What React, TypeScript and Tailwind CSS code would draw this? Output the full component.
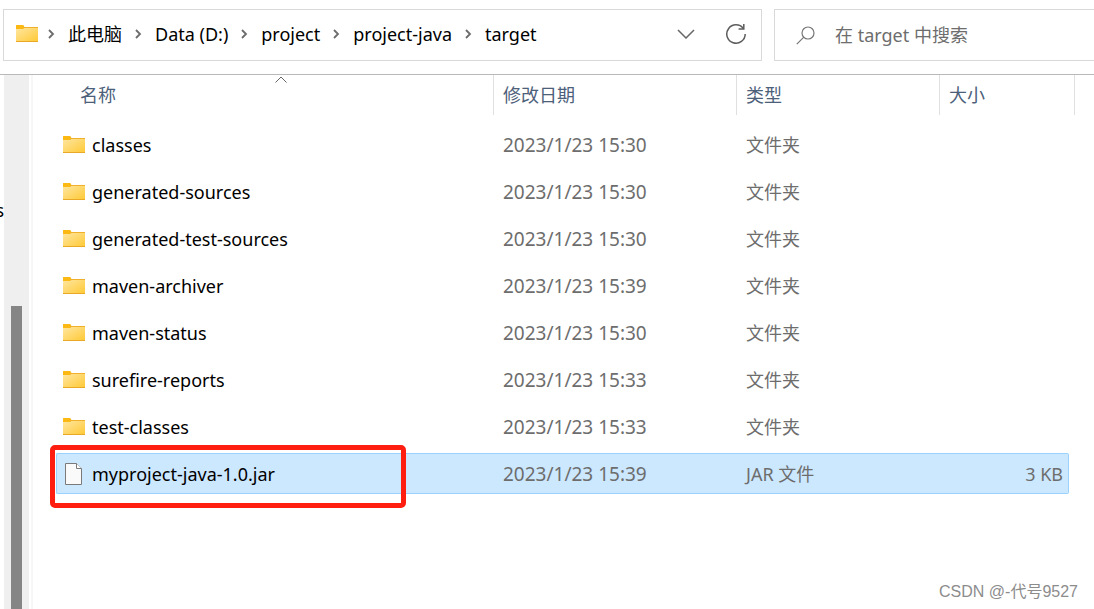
import type { ReactNode } from "react";

type Entry = {
  name: string;
  modified: string;
  type: string;
  size?: string;
  selected?: boolean;
};

const crumbs = ["此电脑", "Data (D:)", "project", "project-java", "target"];

const entries: Entry[] = [
  { name: "classes", modified: "2023/1/23 15:30", type: "文件夹" },
  { name: "generated-sources", modified: "2023/1/23 15:30", type: "文件夹" },
  { name: "generated-test-sources", modified: "2023/1/23 15:30", type: "文件夹" },
  { name: "maven-archiver", modified: "2023/1/23 15:39", type: "文件夹" },
  { name: "maven-status", modified: "2023/1/23 15:30", type: "文件夹" },
  { name: "surefire-reports", modified: "2023/1/23 15:33", type: "文件夹" },
  { name: "test-classes", modified: "2023/1/23 15:33", type: "文件夹" },
  { name: "myproject-java-1.0.jar", modified: "2023/1/23 15:39", type: "JAR 文件", size: "3 KB", selected: true },
];

function FolderIcon() {
  return (
    <svg width="22" height="18" viewBox="0 0 22 18" className="shrink-0" aria-hidden="true">
      <defs>
        <linearGradient id="folder" x1="0" y1="0" x2="1" y2="1">
          <stop offset="0" stopColor="#ffe6a0" />
          <stop offset="1" stopColor="#ffc934" />
        </linearGradient>
      </defs>
      <path d="M0 1 Q0 0 1 0 H7 L8.5 2 H22 V5 H0 Z" fill="#f0b02c" />
      <path d="M0 4 H7 L8.5 3 H22 V17 H0 Z" fill="url(#folder)" />
      <path d="M0 1 Q0 0 1 0 H7 L8 1.5 L7 4 H0 Z" fill="#fdb913" />
      <rect y="16" width="22" height="1" fill="#e9a825" />
    </svg>
  );
}

function FileIcon() {
  return (
    <svg width="22" height="22" viewBox="0 0 22 22" className="shrink-0" aria-hidden="true">
      <path d="M2.5 0.5 H13.5 L18.5 5.5 V21.5 H2.5 Z" fill="#fafafa" stroke="#7a7a7a" />
      <path d="M13.5 0.5 V5.5 H18.5" fill="#fff" stroke="#7a7a7a" />
    </svg>
  );
}

function Crumb({ children }: { children: ReactNode }) {
  return (
    <li className="flex items-center gap-[13px]">
      <svg width="7" height="10" viewBox="0 0 7 10" fill="none" stroke="#6b6b6b" strokeWidth="1.8" aria-hidden="true">
        <path d="M1 1 L5 5 L1 9" />
      </svg>
      <button type="button" className="whitespace-nowrap text-black">{children}</button>
    </li>
  );
}

function HeadCell({ children, first, last }: { children: ReactNode; first?: boolean; last?: boolean }) {
  return (
    <th scope="col" colSpan={last ? 2 : 1} className="p-0 pb-1.5 font-normal text-left text-[#4c607a]">
      <div
        className={`relative flex h-10 items-center ${first ? "pl-6" : "border-l border-[#e0e0e0] pl-[9px]"} ${last ? "border-r" : ""}`}
      >
        {children}
      </div>
    </th>
  );
}

function Row({ entry }: { entry: Entry }) {
  const fill = entry.selected ? "border-[#99d1ff] bg-[#cce8ff]" : "border-transparent";
  return (
    <tr>
      <td className="p-0 py-[3px]">
        <div className={`relative flex h-[41px] items-center gap-[7px] rounded-l-xs border-y border-l pl-1.5 text-black ${fill}`}>
          {entry.selected ? <FileIcon /> : <FolderIcon />}
          {entry.name}
          {/* red marker round the built jar */}
          {entry.selected && (
            <span className="absolute -left-[7px] -top-[9px] h-[63px] w-[356px] rounded-[5px] border-5 border-[#ff1e10]" />
          )}
        </div>
      </td>
      <td className="p-0">
        <div className={`flex h-[41px] items-center border-y pl-2.5 text-[19px] ${fill}`}>{entry.modified}</div>
      </td>
      <td className="p-0">
        <div className={`flex h-[41px] items-center border-y pl-2.5 ${fill}`}>{entry.type}</div>
      </td>
      <td className="p-0">
        <div className={`flex h-[41px] items-center justify-end rounded-r-xs border-y border-r pr-[5px] ${fill}`}>
          {entry.size}
        </div>
      </td>
      <td className="p-0" />
    </tr>
  );
}

export default function App() {
  return (
    <div className="relative flex h-screen flex-col overflow-hidden bg-white font-['Noto_Sans','Noto_Sans_CJK_SC',sans-serif] text-[18px] leading-6 text-[#6d6d6d]">

      {/* ADDRESS BAR */}
      <header className="flex gap-3 border-b border-[#b9b9b9] pt-[9px] pb-[13px] pl-[3px]">
        <div className="flex h-[52px] min-w-0 flex-1 items-center border border-[#d9d9d9] pr-3.5 pb-0.5 pl-3">
          <FolderIcon />
          <nav aria-label="路径" className="ml-2.5 flex-1">
            <ol className="flex items-center gap-[13px]">
              {crumbs.map((crumb) => (
                <Crumb key={crumb}>{crumb}</Crumb>
              ))}
            </ol>
          </nav>
          <div className="flex items-center gap-[30px]">
            <button type="button" aria-label="展开">
              <svg width="18" height="10" viewBox="0 0 18 10" fill="none" stroke="#666" strokeWidth="1.5">
                <path d="M1 1 L9 9 L17 1" />
              </svg>
            </button>
            <button type="button" aria-label="刷新">
              <svg width="22" height="22" viewBox="0 0 22 22" fill="none" stroke="#5c5c5c" strokeWidth="1.5">
                <path d="M18.4 5.6 A9.2 9.2 0 1 0 20.2 11" />
                <path d="M18.8 1 V6 H13.6" />
              </svg>
            </button>
          </div>
        </div>
        <label className="flex h-[52px] w-80 shrink-0 items-center gap-5 border border-r-0 border-[#d9d9d9] pl-[21px]">
          <svg width="19" height="19" viewBox="0 0 19 19" fill="none" stroke="#777" strokeWidth="1.2" aria-hidden="true">
            <circle cx="12" cy="7" r="6" />
            <path d="M7.8 11.2 L0.8 18.2" />
          </svg>
          <input
            type="text"
            aria-label="搜索"
            placeholder="在 target 中搜索"
            className="min-w-0 flex-1 outline-none placeholder:text-[#6d6d6d]"
          />
        </label>
      </header>

      <div className="flex min-h-0 flex-1">

        {/* NAVIGATION PANE, scrolled almost out of view */}
        <aside className="flex w-1 justify-end overflow-hidden pt-[123px] text-black">s</aside>
        <div className="flex w-[25px] shrink-0 bg-[#efefef] pt-[231px] pl-[7px]">
          <div className="w-[11px] bg-[#858585]" />
        </div>

        {/* FILE LIST */}
        <main className="ml-0.5 min-w-0 flex-1 border-l-2 border-[#f7f7f7] pr-[19px] pl-[23px]">
          <table className="w-full table-fixed border-separate border-spacing-0">
            <colgroup>
              <col />
              <col className="w-[243px]" />
              <col className="w-[203px]" />
              <col className="w-[130px]" />
              <col className="w-1.5" />
            </colgroup>
            <thead>
              <tr>
                <HeadCell first>
                  名称
                  <svg width="12" height="7" viewBox="0 0 12 7" fill="none" stroke="#666" className="absolute top-px left-1/2" aria-hidden="true">
                    <path d="M0.5 6.5 L6 1 L11.5 6.5" />
                  </svg>
                </HeadCell>
                <HeadCell>修改日期</HeadCell>
                <HeadCell>类型</HeadCell>
                <HeadCell last>大小</HeadCell>
              </tr>
            </thead>
            <tbody>
              {entries.map((entry) => (
                <Row key={entry.name} entry={entry} />
              ))}
            </tbody>
          </table>
        </main>
      </div>

      <p className="absolute right-4 bottom-[5px] font-['Liberation_Sans','Noto_Sans_CJK_SC',sans-serif] text-base text-[#8c8c8c]">
        CSDN @-代号9527
      </p>
    </div>
  );
}
